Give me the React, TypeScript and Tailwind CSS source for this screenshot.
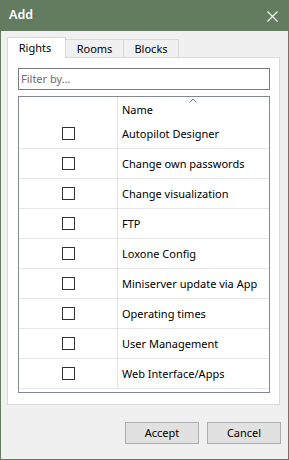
import React from "react";

const rows = [
  "Autopilot Designer",
  "Change own passwords",
  "Change visualization",
  "FTP",
  "Loxone Config",
  "Miniserver update via App",
  "Operating times",
  "User Management",
  "Web Interface/Apps",
];

const font = { fontFamily: '"Noto Sans", "Open Sans", sans-serif' };

export default function App() {
  return (
    <div
      className="w-[289px] h-[460px] border border-t-0 border-[#637b5f] bg-[#f0f0f0] flex flex-col text-[11px] text-black"
      style={font}
    >
      <div className="h-[31px] bg-[#637b5f] flex items-center justify-between pl-[8px] pr-[10px] shrink-0">
        <span className="text-white font-semibold text-[12.5px]">Add</span>
        <svg width="11" height="11" viewBox="0 0 11 11" className="mt-[1px]">
          <path d="M0.5 0.5 L10.5 10.5 M10.5 0.5 L0.5 10.5" stroke="#fff" strokeWidth="1.1" fill="none" />
        </svg>
      </div>
      <div className="pl-[6px] pt-[6px] flex flex-col">
        <div className="flex items-end h-[20px] relative z-10">
          <div className="w-[59px] h-[21px] -mb-[1px] bg-white border border-b-0 border-[#d9d9d9] flex items-center justify-center pr-[3px]">
            Rights
          </div>
          <div className="w-[58px] h-[18px] bg-[#f0f0f0] border border-l-0 border-b-0 border-[#d9d9d9] flex items-center justify-center pt-[1px]">
            Rooms
          </div>
          <div className="w-[55px] h-[18px] bg-[#f0f0f0] border border-l-0 border-b-0 border-[#d9d9d9] flex items-center justify-center pt-[1px]">
            Blocks
          </div>
        </div>
        <div className="w-[273px] h-[348px] bg-white border border-[#d9d9d9] pl-[10px] pt-[10px] flex flex-col">
          <div className="w-[252px] h-[22px] border border-[#7a7a7a] flex items-center pl-[2px] pt-[1px] text-[#6d6d6d]">
            Filter by...
          </div>
          <div className="mt-[6px] w-[252px] h-[297px] border border-[#828790] flex flex-col">
            <div className="h-[22px] flex shrink-0">
              <div className="w-[99px] border-r border-[#e5e5e5]" />
              <div className="flex-1 relative flex items-end pl-[4px] pb-[1px]">
                <span>Name</span>
                <svg width="8" height="5" viewBox="0 0 8 5" className="absolute left-[71px] top-[1px]">
                  <path d="M0.5 4.5 L4 1 L7.5 4.5" stroke="#7a7a7a" strokeWidth="1" fill="none" />
                </svg>
              </div>
            </div>
            {rows.map((r) => (
              <div key={r} className="h-[30px] flex shrink-0 border-b border-[#e5e5e5]">
                <div className="w-[99px] border-r border-[#e5e5e5] flex items-center justify-center pl-[1px]">
                  <div className="w-[13px] h-[13px] border border-[#333333] bg-white" />
                </div>
                <div className="flex-1 flex items-center pl-[4px] pt-[2px] whitespace-nowrap">{r}</div>
              </div>
            ))}
          </div>
        </div>
      </div>
      <div className="flex justify-end gap-[8px] pr-[7px] mt-[17px]">
        <button className="w-[74px] h-[22px] bg-[#e1e1e1] border border-[#adadad] flex items-center justify-center">
          Accept
        </button>
        <button className="w-[74px] h-[22px] bg-[#e1e1e1] border border-[#adadad] flex items-center justify-center">
          Cancel
        </button>
      </div>
    </div>
  );
}
